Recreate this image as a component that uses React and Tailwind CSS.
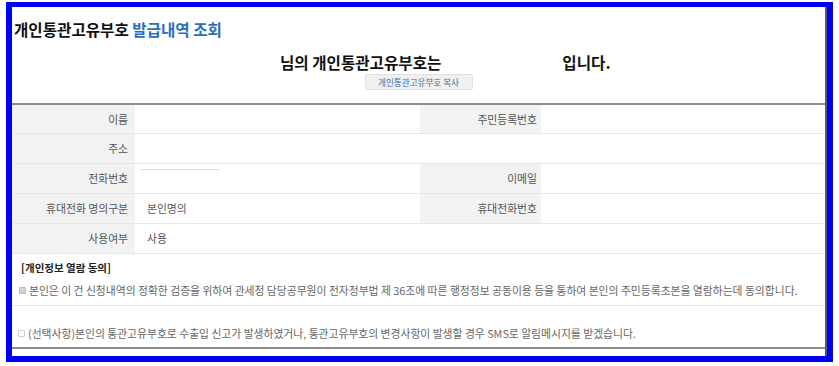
const rowLine = "border-b border-[#e7e7e7]";

const Label = ({ children, pr = "pr-[7px]" }) => (
    <div className={`bg-[#f2f2f2] flex items-center justify-end ${pr} text-[10.8px] text-[#555]`}>{children}</div>
);

const Value = ({ children, span = "" }) => (
    <div className={`flex items-center pl-[12px] text-[10.8px] text-[#555] ${span}`}>{children}</div>
);

export default function App() {
    return (
        <div className="w-[839px] h-[366px] bg-white pt-[2px] pl-[6px] font-['Noto_Sans_CJK_KR','Noto_Sans',sans-serif]">
            <div className="w-[827px] h-[360px] border-[#0000f2] border-l-[6px] border-t-[5px] border-r-[6px] border-b-[6px] bg-white">
                <div className="h-full border-r-2 border-[#5a5a5a] flex flex-col">
                    {/* title */}
                    <div className="pt-[12px] pl-[2px] text-[15.6px] leading-[20px] font-bold text-[#111]">
                        개인통관고유부호 <span className="text-[#2a6ebb]">발급내역 조회</span>
                    </div>

                    <div className="mt-[13px] pl-[268px] flex text-[15.6px] leading-[20px] font-bold text-[#111]">
                        <span>님의 개인통관고유부호는</span>
                        <span className="ml-[121px]">입니다.</span>
                    </div>

                    <button className="mt-[2px] mx-auto w-[108px] h-[16px] bg-[#f0f0f0] border border-[#e2e2e2] rounded-[2px] text-[8.6px] leading-none text-[#3b6fb6]">
                        개인통관고유부호 복사
                    </button>

                    {/* info table */}
                    <div className="mt-[13px] border-t-2 border-[#8c8c8c]">
                        <div className={`grid grid-cols-[123px_285px_121px_1fr] h-[29px] ${rowLine}`}>
                            <Label>이름</Label>
                            <Value />
                            <Label pr="pr-[4px]">주민등록번호</Label>
                            <Value />
                        </div>
                        <div className={`grid grid-cols-[123px_1fr] h-[30px] ${rowLine}`}>
                            <Label>주소</Label>
                            <Value />
                        </div>
                        <div className={`grid grid-cols-[123px_285px_121px_1fr] h-[30px] ${rowLine}`}>
                            <Label>전화번호</Label>
                            <div className="pt-[5px] pl-[5px]">
                                <div className="w-[80px] h-px bg-[#dcdcf6]" />
                            </div>
                            <Label pr="pr-[4px]">이메일</Label>
                            <Value />
                        </div>
                        <div className={`grid grid-cols-[123px_285px_121px_1fr] h-[30px] ${rowLine}`}>
                            <Label>휴대전화 명의구분</Label>
                            <Value>본인명의</Value>
                            <Label pr="pr-[4px]">휴대전화번호</Label>
                            <Value />
                        </div>
                        <div className={`grid grid-cols-[123px_1fr] h-[30px] ${rowLine}`}>
                            <Label>사용여부</Label>
                            <Value>사용</Value>
                        </div>
                    </div>

                    {/* consent */}
                    <div className="pt-[6px] pl-[9px] text-[10.5px] leading-[16px] font-bold text-[#222]">
                        [개인정보 열람 동의]
                    </div>
                    <div className={`h-[30px] flex items-center pl-[7px] ${rowLine}`}>
                        <span className="w-[7px] h-[7px] bg-[#d4d4d4] border border-[#bdbdbd] rounded-[1px]" />
                        <span className="ml-[3px] text-[10.8px] text-[#666]">
                            본인은 이 건 신청내역의 정확한 검증을 위하여 관세청 담당공무원이 전자정부법 제 36조에 따른 행정정보 공동이용 등을 통하여 본인의 주민등록초본을 열람하는데 동의합니다.
                        </span>
                    </div>
                    <div className="pt-[19px] pb-[6px] flex items-center pl-[6px] border-b-2 border-[#8c8c8c]">
                        <span className="w-[7px] h-[7px] bg-white border border-[#cfcfcf] rounded-[1px]" />
                        <span className="ml-[3px] text-[10.8px] leading-[16px] text-[#666]">
                            (선택사항)본인의 통관고유부호로 수출입 신고가 발생하였거나, 통관고유부호의 변경사항이 발생할 경우 SMS로 알림메시지를 받겠습니다.
                        </span>
                    </div>
                </div>
            </div>
        </div>
    );
}
